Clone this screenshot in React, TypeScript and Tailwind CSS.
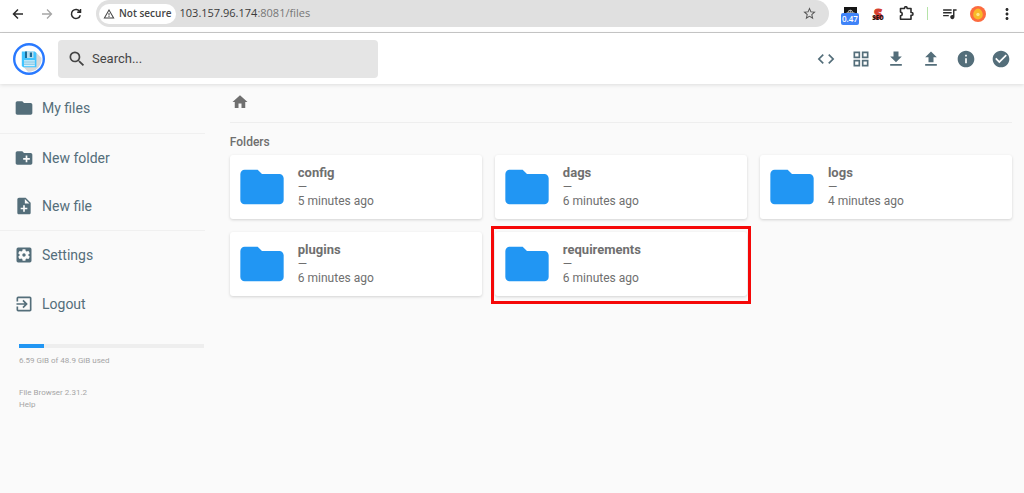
import type { ReactNode } from "react";
import {
  MdCheckCircle,
  MdCode,
  MdCreateNewFolder,
  MdExitToApp,
  MdFileDownload,
  MdFileUpload,
  MdFolder,
  MdGridView,
  MdHome,
  MdInfo,
  MdMoreVert,
  MdNoteAdd,
  MdQueueMusic,
  MdSearch,
  MdSettingsApplications,
  MdStarBorder,
  MdWarningAmber,
} from "react-icons/md";

const folders = [
  { name: "config", modified: "5 minutes ago" },
  { name: "dags", modified: "6 minutes ago" },
  { name: "logs", modified: "4 minutes ago" },
  { name: "plugins", modified: "6 minutes ago" },
  { name: "requirements", modified: "6 minutes ago", highlighted: true },
];

const actions = [
  { label: "Toggle shell", icon: <MdCode size={20} /> },
  { label: "Switch view", icon: <MdGridView size={20} /> },
  { label: "Download", icon: <MdFileDownload size={20} /> },
  { label: "Upload", icon: <MdFileUpload size={20} /> },
  { label: "Info", icon: <MdInfo size={20} /> },
  { label: "Select multiple", icon: <MdCheckCircle size={20} /> },
];

const usedSpace = 6.59;
const totalSpace = 48.9;

function BrowserBar() {
  return (
    <div className="flex items-start h-[33px] pl-3 pr-2 bg-white border-b border-[#c9c9c9] font-['Open_Sans','Noto_Sans',sans-serif]">
      <div className="flex items-center gap-[17px] w-[84px] h-[27px] shrink-0 text-[#2b2b2b]">
        <button aria-label="Back">
          <svg width="12" height="12" viewBox="0 0 12 12" fill="none" stroke="currentColor" strokeWidth="1.5">
            <path d="M11 6H2M6 1.5 1.5 6 6 10.5" />
          </svg>
        </button>
        <button aria-label="Forward" className="text-[#a6a6a6]">
          <svg width="12" height="12" viewBox="0 0 12 12" fill="none" stroke="currentColor" strokeWidth="1.3">
            <path d="M1 6h9M6 1.5 10.5 6 6 10.5" />
          </svg>
        </button>
        <button aria-label="Reload">
          <svg width="12" height="12" viewBox="0 0 12 12" fill="none" stroke="currentColor" strokeWidth="1.5">
            <path d="M10.3 7.2A4.5 4.5 0 1 1 9.8 3.6M10.5 1v3.3H7.2" />
          </svg>
        </button>
      </div>
      <div className="flex items-center flex-1 h-[27px] pl-[3px] pr-3 rounded-full bg-[#e0e0e0]">
        <button className="flex items-center gap-1 h-[20px] pl-1 pr-1 rounded-full bg-white text-[10px] font-semibold text-[#444]">
          <MdWarningAmber size={12} />
          Not secure
        </button>
        <p className="flex-1 ml-1 text-[11px] text-[#777]">
          <span className="text-[#3a3a3a]">103.157.96.174</span>:8081/files
        </p>
        <button aria-label="Bookmark" className="text-[#555]">
          <MdStarBorder size={15} />
        </button>
      </div>
      <div className="flex items-center h-[27px] ml-3 shrink-0 text-[#2b2b2b]">
        <button aria-label="Page rank">
          <svg width="18" height="22" viewBox="0 0 18 22">
            <rect x="3" y="4" width="13" height="9" fill="#151515" />
            <path d="M7 9.500a2.300 2.300 0 0 1 4.600 0M9.300 7v2.500M5.500 9.800h8" stroke="#ddd" strokeWidth=".8" fill="none" />
            <rect x="0" y="10" width="18" height="12" rx="2" fill="#3f83f8" />
            <text x="9" y="19" textAnchor="middle" fontSize="8" fontWeight="600" fill="#fff">0.47</text>
          </svg>
        </button>
        <button aria-label="SEO" className="ml-3">
          <svg width="14" height="18" viewBox="0 0 14 18" className="overflow-visible">
            <text x="7" y="14" textAnchor="middle" fontSize="14" fontWeight="800" fill="#d63d2e" stroke="#d63d2e" strokeWidth="1">S</text>
            <text x="7" y="15" textAnchor="middle" fontSize="6" fontWeight="800" fill="#2a1110">SEO</text>
          </svg>
        </button>
        <button aria-label="Extensions" className="ml-[14px]">
          <svg width="15" height="15" viewBox="0 0 15 15" fill="none" stroke="currentColor" strokeWidth="1.6" strokeLinejoin="round">
            <path d="M1.500 2.500h4V2a1.300 1.300 0 0 1 2.600 0v.5h3.900v4h.6a1.400 1.400 0 0 1 0 2.800H12v4H1.500V9.700c2.300-.1 2.300-3.500 0-3.600z" />
          </svg>
        </button>
        <span className="w-px h-[13px] ml-[13px] bg-[#b5e3a8]" />
        <button aria-label="Media" className="ml-[13px]">
          <MdQueueMusic size={17} />
        </button>
        <button aria-label="Profile" className="ml-3">
          <svg width="16" height="16" viewBox="0 0 16 16">
            <circle cx="8" cy="8" r="8" fill="#fc6b3f" />
            <path d="M8 2.500c2.500 0 4.800 3.400 4.800 6.200a4.800 4.800 0 0 1-9.600 0C3.200 5.900 5.500 2.500 8 2.500z" fill="#f8b928" />
            <circle cx="8" cy="8.500" r="1.700" fill="#ffe58a" />
          </svg>
        </button>
        <button aria-label="Menu" className="ml-3">
          <MdMoreVert size={18} />
        </button>
      </div>
    </div>
  );
}

function Logo() {
  return (
    <svg width="32" height="32" viewBox="0 0 32 32" className="shrink-0" role="img" aria-label="File Browser">
      <circle cx="16" cy="16" r="14.800" fill="#fff" stroke="#2979ff" strokeWidth="2.400" />
      <path d="M22.500 9 28.500 15A12.800 12.800 0 0 1 15 28.700L9.500 23z" fill="#d9d9d9" />
      <path d="M8.800 8.500h13l1.600 1.500v14.300H10.200L8.800 23z" fill="#40c4ff" />
      <path d="M12 8.500h8.500V15H12z" fill="#b9dcea" />
      <path d="M12 8.500h2V15h-2zM16.800 9.500H19V14h-2.200z" fill="#1b6c98" />
      <path d="M11 17.200h10.800v6H11z" fill="#d7f0fb" />
      <path d="M11 19h10.800M11 21.200h10.800" stroke="#69b9dc" strokeWidth=".9" />
    </svg>
  );
}

function Header() {
  return (
    <header className="relative flex items-center h-[51px] px-[13px] bg-white shadow-[0_1px_4px_rgba(0,0,0,0.12)]">
      <Logo />
      <label className="flex items-center gap-[5px] h-[38px] w-80 ml-[13px] pl-[9px] rounded bg-[#e5e5e5] text-[#444]">
        <MdSearch size={20} />
        <input
          type="text"
          aria-label="Search"
          placeholder="Search..."
          className="flex-1 text-[13px] outline-none placeholder:text-[#444]"
        />
      </label>
      <div className="flex gap-[15px] ml-auto text-[#546e7a]">
        {actions.map((action) => (
          <button key={action.label} aria-label={action.label}>
            {action.icon}
          </button>
        ))}
      </div>
    </header>
  );
}

function NavButton({ icon, children }: { icon: ReactNode; children: ReactNode }) {
  return (
    <button className="flex items-center gap-2 w-full h-12 pl-[14px] text-[14px] text-[#546e7a]">
      {icon}
      {children}
    </button>
  );
}

function Sidebar() {
  return (
    <nav className="w-1/5 shrink-0">
      <div className="pb-px">
        <NavButton icon={<MdFolder size={20} />}>My files</NavButton>
      </div>
      <div className="border-y border-[#f0f0f0]">
        <NavButton icon={<MdCreateNewFolder size={20} />}>New folder</NavButton>
        <NavButton icon={<MdNoteAdd size={20} />}>New file</NavButton>
      </div>
      <div className="flex flex-col gap-px">
        <NavButton icon={<MdSettingsApplications size={20} />}>Settings</NavButton>
        <NavButton icon={<MdExitToApp size={20} />}>Logout</NavButton>
      </div>
      <div className="pl-[19px] pr-px pt-4 text-[8px] leading-[12px] text-[#a5a5a5]">
        <div className="h-1 bg-[#eeeeee]">
          <div className="h-full bg-[#2196f3]" style={{ width: `${(usedSpace / totalSpace) * 100}%` }} />
        </div>
        <p className="mt-[7px]">
          {usedSpace} GiB of {totalSpace} GiB used
        </p>
        <p className="mt-5">File Browser 2.31.2</p>
        <a href="#help">Help</a>
      </div>
    </nav>
  );
}

function FolderCard({ name, modified, highlighted }: { name: string; modified: string; highlighted?: boolean }) {
  return (
    <a
      href={`#${name}`}
      className="relative flex items-center h-16 pl-[6px] gap-[10px] rounded-[3px] bg-white text-[#6f6f6f] shadow-[0_1px_3px_rgba(0,0,0,0.16)]"
    >
      <MdFolder size={52} className="text-[#2196f3]" />
      <div className="text-[12px] leading-[14px]">
        <p className="text-[13px] leading-[14px] font-bold">{name}</p>
        <p>—</p>
        <p>{modified}</p>
      </div>
      {highlighted && <span className="absolute -inset-x-1 -top-[6px] -bottom-2 border-3 border-[#f50808]" />}
    </a>
  );
}

function App() {
  return (
    <div className="min-h-screen bg-[#fafafa] font-[Roboto,sans-serif]">
      <BrowserBar />
      <Header />
      <div className="flex">
        <Sidebar />
        <main className="flex-1 pl-[25px] pr-3">
          <div className="flex items-center h-[39px] pb-[2px] border-b border-[#eeeeee] text-[#6f6f6f]">
            <a href="#home" aria-label="Home" className="pl-px">
              <MdHome size={18} />
            </a>
          </div>
          <h2 className="mt-3 mb-[5px] text-[12px] leading-[15px] font-medium text-[#6f6f6f]">Folders</h2>
          <div className="grid grid-cols-3 gap-[13px]">
            {folders.map((folder) => (
              <FolderCard key={folder.name} {...folder} />
            ))}
          </div>
        </main>
      </div>
    </div>
  );
}

export default App;
